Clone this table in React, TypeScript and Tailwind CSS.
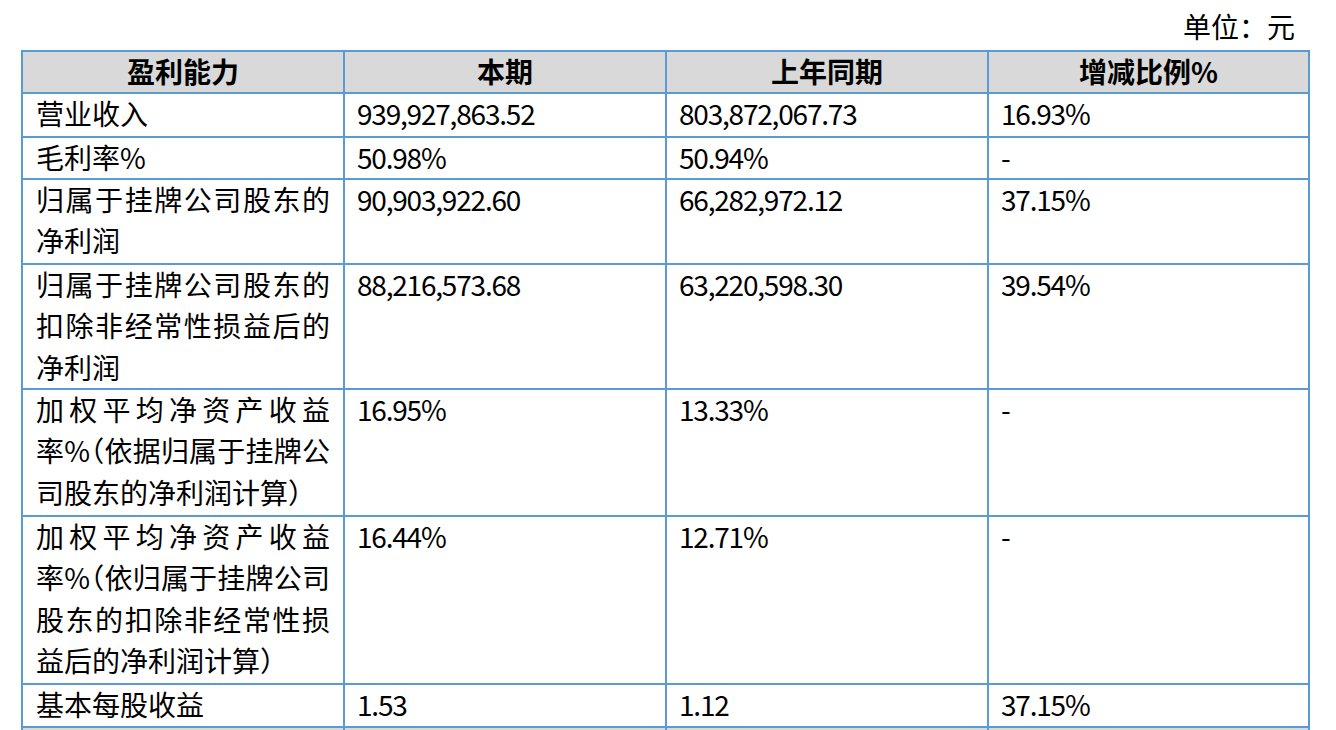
import React from "react";

type Row = {
  label: { text: React.ReactNode; full: boolean }[];
  v1: string;
  v2: string;
  v3: string;
};

const Paren = () => <span className="[font-feature-settings:'halt']">（</span>;

const rows: Row[] = [
  { label: [{ text: "营业收入", full: false }], v1: "939,927,863.52", v2: "803,872,067.73", v3: "16.93%" },
  { label: [{ text: "毛利率%", full: false }], v1: "50.98%", v2: "50.94%", v3: "-" },
  {
    label: [
      { text: "归属于挂牌公司股东的", full: true },
      { text: "净利润", full: false },
    ],
    v1: "90,903,922.60",
    v2: "66,282,972.12",
    v3: "37.15%",
  },
  {
    label: [
      { text: "归属于挂牌公司股东的", full: true },
      { text: "扣除非经常性损益后的", full: true },
      { text: "净利润", full: false },
    ],
    v1: "88,216,573.68",
    v2: "63,220,598.30",
    v3: "39.54%",
  },
  {
    label: [
      { text: "加权平均净资产收益", full: true },
      { text: <>率%<Paren />依据归属于挂牌公</>, full: true },
      { text: "司股东的净利润计算）", full: false },
    ],
    v1: "16.95%",
    v2: "13.33%",
    v3: "-",
  },
  {
    label: [
      { text: "加权平均净资产收益", full: true },
      { text: <>率%<Paren />依归属于挂牌公司</>, full: true },
      { text: "股东的扣除非经常性损", full: true },
      { text: "益后的净利润计算）", full: false },
    ],
    v1: "16.44%",
    v2: "12.71%",
    v3: "-",
  },
  { label: [{ text: "基本每股收益", full: false }], v1: "1.53", v2: "1.12", v3: "37.15%" },
];

function Cell({ children, first }: { children: React.ReactNode; first?: boolean }) {
  return (
    <div className={`bg-white ${first ? "pl-[13px] pr-[13px]" : "pl-[12px] pr-[12px] tracking-[-1.2px]"}`}>
      <div className="-mt-[1.5px]">{children}</div>
    </div>
  );
}

function HeadCell({ children }: { children: React.ReactNode }) {
  return (
    <div className="bg-[#d9d9d9] text-center font-bold">
      <div className="-mt-[1.5px]">{children}</div>
    </div>
  );
}

export default function App() {
  return (
    <div className="w-[1336px] h-[730px] overflow-hidden bg-white text-black font-['Noto_Sans_CJK_SC',sans-serif] text-[28px] leading-[41.6px]">
      <div className="h-[50px] flex justify-end pr-[41px] pt-[6px]">
        <span>单位：元</span>
      </div>
      <div className="ml-[21px] w-[1289px] grid grid-cols-[320px_320px_320px_319px] grid-rows-[40px_42px_40px_83px_123px_125px_166px_41px_40px] gap-[2px] p-[2px] bg-[#5b9bd5]">
        <HeadCell>盈利能力</HeadCell>
        <HeadCell>本期</HeadCell>
        <HeadCell>上年同期</HeadCell>
        <HeadCell>增减比例%</HeadCell>
        {rows.map((r, i) => (
          <React.Fragment key={i}>
            <Cell first>
              {r.label.map((l, j) => (
                <div
                  key={j}
                  className={`whitespace-nowrap ${l.full ? "text-justify [text-align-last:justify]" : "text-left"}`}
                >
                  {l.text}
                </div>
              ))}
            </Cell>
            <Cell>{r.v1}</Cell>
            <Cell>{r.v2}</Cell>
            <Cell>{r.v3}</Cell>
          </React.Fragment>
        ))}
        <div className="bg-[#d9d9d9]" />
        <div className="bg-[#d9d9d9]" />
        <div className="bg-[#d9d9d9]" />
        <div className="bg-[#d9d9d9]" />
      </div>
    </div>
  );
}
